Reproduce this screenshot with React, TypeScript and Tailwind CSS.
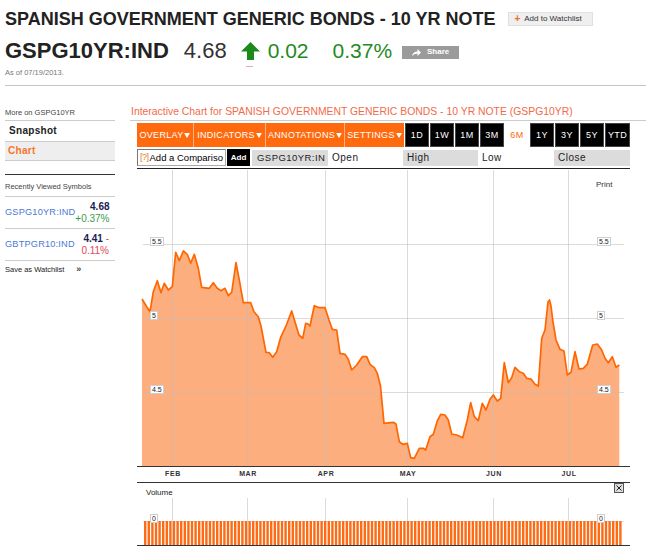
import React from 'react';

const PTS: [number, number][] = [
  [142, 299], [146.7, 306.7], [150, 311.7], [153.3, 291.7], [157.3, 280.7], [161, 292.7], [164.3, 283.3],
  [168.3, 290], [172.3, 286.7], [175.7, 252.3], [179.3, 260.7], [183.3, 251], [187.3, 254.3], [190.7, 263.3],
  [194.3, 254.3], [198.3, 268.3], [201.7, 287.3], [209.3, 288.3], [213.3, 282.7], [217.3, 288.3], [221, 290.7],
  [225, 288.3], [228.3, 295.7], [231.7, 292.3], [236, 262.7], [239.3, 280], [243.3, 302.7], [250.7, 302.7],
  [254, 311.7], [258.3, 316.7], [261, 326], [266, 352.3], [269.3, 352.7], [272.7, 357.3], [276.7, 351.7],
  [280.7, 337.3], [285.7, 326.7], [291.7, 311], [295, 322], [299, 335], [302.7, 338.3], [305.7, 323.3],
  [308, 324], [310, 326], [314.3, 305.7], [319.3, 307.7], [325, 307.7], [329, 320], [332.3, 329.3],
  [336.7, 330], [340, 353.3], [345, 354.3], [348.3, 359.3], [351.7, 370], [356.7, 365], [362.3, 356.7],
  [366.7, 356.7], [370, 364.3], [374.3, 367.7], [377.3, 373.3], [380.5, 386], [384, 423.3], [393.3, 422.3],
  [396, 424], [399.3, 441.7], [402.7, 444.3], [407.3, 443.3], [410.7, 457.7], [414.3, 458.3], [419.3, 448.3],
  [423.3, 448.3], [425.7, 450], [430, 436.7], [433.3, 434.3], [437.3, 421], [440.7, 414.3], [445, 415],
  [448.3, 420], [451.7, 434], [456.7, 435], [462.7, 437.7], [467.3, 420], [470.7, 402.7], [474.3, 416.7],
  [478.3, 420.7], [482.3, 403.3], [486, 410], [490, 399.3], [493.3, 395], [497.3, 401], [500.7, 398.3],
  [504.3, 362.7], [508.3, 382.7], [511.7, 377.7], [515, 367.3], [519.3, 371.7], [523.3, 373.3], [526.7, 378.3],
  [531, 379], [535, 384.3], [538.3, 386], [541.7, 338.3], [545, 330], [548, 302], [549.5, 300], [551, 306],
  [552.7, 320], [556, 340], [560, 349.3], [564, 351], [567.3, 375], [571, 372.3], [575, 351.7], [579, 369],
  [583.3, 368.3], [587.3, 364.3], [592.7, 345], [597.3, 344], [601.7, 350], [605, 358.3], [608.3, 362.7],
  [612.3, 356.7], [616, 367.3], [619.3, 365],
];

const GRID_X = [172, 247, 325, 407, 493, 568];
const MONTHS = ['FEB', 'MAR', 'APR', 'MAY', 'JUN', 'JUL'];
const GRID_Y = [244, 318, 392];
const GRID = 'rgba(190,190,190,0.55)';
const SVG_FONT = 'Liberation Sans, Arial, sans-serif';

function Tag({ x, y, w, label }: { x: number; y: number; w: number; label: string }) {
  return (
    <g>
      <rect x={x + 0.5} y={y + 0.5} width={w} height={8} fill="#fff" stroke="#cfcfcf" />
      <text x={x + 2} y={y + 7} fontSize={7} fill="#222" fontFamily={SVG_FONT}>
        {label}
      </text>
    </g>
  );
}

function Caret() {
  return (
    <svg width="6" height="5" viewBox="0 0 6 5" className="ml-[1px]">
      <path d="M0 0 H6 L3 5 Z" fill="#fff" />
    </svg>
  );
}

function PriceChart() {
  const line = PTS.map(([x, y]) => `${x},${y}`).join(' ');
  const area = `${line} 619.3,466 142,466`;
  const bars: number[] = [];
  for (let x = 144; x < 621; x += 3.6) bars.push(x);

  return (
    <svg width="493" height="380" viewBox="137 167 493 380" className="block">
      <line x1="137" x2="630" y1="168.5" y2="168.5" stroke="#222" />

      <polygon points={area} fill="#fdae7e" />
      {GRID_X.map((x) => (
        <line key={x} x1={x + 0.5} x2={x + 0.5} y1="170" y2="466" stroke={GRID} />
      ))}
      {GRID_Y.map((y) => (
        <line key={y} x1="143" x2="624" y1={y + 0.5} y2={y + 0.5} stroke={GRID} />
      ))}
      <polyline points={line} fill="none" stroke="#ff6600" strokeWidth="1.7" strokeLinejoin="round" />

      <Tag x={150} y={237} w={13} label="5.5" />
      <Tag x={150} y={311} w={7} label="5" />
      <Tag x={150} y={385} w={13} label="4.5" />
      <Tag x={597} y={237} w={13} label="5.5" />
      <Tag x={597} y={311} w={7} label="5" />
      <Tag x={597} y={385} w={13} label="4.5" />

      <text x="596" y="187" fontSize="8" fill="#333" fontFamily={SVG_FONT}>
        Print
      </text>

      <line x1="137" x2="630" y1="466.5" y2="466.5" stroke="#333" />
      {MONTHS.map((m, i) => (
        <text
          key={m}
          x={GRID_X[i] + 1}
          y="476"
          fontSize="7"
          fontWeight="bold"
          letterSpacing="0.6"
          textAnchor="middle"
          fill="#333"
          fontFamily={SVG_FONT}
        >
          {m}
        </text>
      ))}

      {/* volume pane */}
      <line x1="137" x2="630" y1="482.5" y2="482.5" stroke="#333" />
      <text x="146" y="495" fontSize="8" fill="#222" fontFamily={SVG_FONT}>
        Volume
      </text>
      <rect x="614.5" y="483.5" width="9" height="9" fill="#ddd" stroke="#555" />
      <path d="M616.5 485.5 L621.5 490.5 M621.5 485.5 L616.5 490.5" stroke="#222" strokeWidth="1" />
      {GRID_X.map((x) => (
        <line key={`v${x}`} x1={x + 0.5} x2={x + 0.5} y1="498" y2="545" stroke={GRID} />
      ))}
      <line x1="143" x2="624" y1="521.5" y2="521.5" stroke="#e4e4e4" />
      {bars.map((x) => (
        <rect key={x} x={x} y="521" width="2.4" height="24" fill="#ff6a14" />
      ))}
      <Tag x={150} y={514} w={7} label="0" />
      <Tag x={597} y={514} w={7} label="0" />
      <line x1="137" x2="630" y1="545.5" y2="545.5" stroke="#333" />
    </svg>
  );
}

function Header() {
  return (
    <div>
      <div className="flex items-center pl-[5px] pt-[9px] h-[29px]">
        <h1 className="text-[18px] leading-[20px] font-bold text-[#222]">
          SPANISH GOVERNMENT GENERIC BONDS - 10 YR NOTE
        </h1>
        <div className="ml-[13px] h-[14px] w-[85px] flex items-center bg-[#efefef] border border-[#e0e0e0]">
          <span className="ml-[5px] text-[10px] leading-none font-bold text-[#f26a1b]">+</span>
          <span className="ml-[4px] text-[8px] leading-none text-[#333]">Add to Watchlist</span>
        </div>
      </div>
      <div className="flex items-center pl-[5px] mt-[10px] h-[24px]">
        <span className="text-[22px] leading-[24px] font-bold text-[#222]">GSPG10YR:IND</span>
        <span className="ml-[15px] text-[22px] leading-[24px] text-[#333]">4.68</span>
        <span className="relative ml-[14px] flex items-center">
          <svg width="19" height="18" viewBox="0 0 19 18">
            <path d="M9.5 0 L19 9.5 L13 9.5 L13 18 L6 18 L6 9.5 L0 9.5 Z" fill="#1a8a1a" />
          </svg>
          <span className="absolute left-[5px] top-[24px] w-[7px] h-[1px] bg-[#f4a7a7]" />
        </span>
        <span className="ml-[8px] text-[21px] leading-[24px] text-[#1f8a1f]">0.02</span>
        <span className="ml-[24px] text-[21px] leading-[24px] text-[#1f8a1f]">0.37%</span>
        <span className="ml-[10px] mt-[2px] h-[13px] w-[57px] bg-[#9b9b9b] flex items-center justify-center gap-[6px]">
          <svg width="9" height="7" viewBox="0 0 9 7">
            <path d="M0 7 Q1 2.5 5.5 2.5 V0 L9 3.5 L5.5 7 V4.5 Q2 4.5 0 7 Z" fill="#fff" />
          </svg>
          <span className="text-[8px] leading-none font-bold text-white">Share</span>
        </span>
      </div>
      <div className="pl-[5px] mt-[5px] text-[7.5px] leading-[10px] text-[#777]">As of 07/19/2013.</div>
      <div className="ml-[5px] mt-[7px] h-[1px] bg-[#c4c4c4]" />
    </div>
  );
}

function Sidebar() {
  return (
    <div className="ml-[5px] w-[110px] text-[#222]">
      <div className="pt-[22px] pb-[2px] h-[35px] text-[7.5px] leading-[10px] text-[#444] border-b border-[#ccc]">
        More on GSPG10YR
      </div>
      <div className="h-[21px] flex items-center pl-[4px] text-[10px] leading-none font-bold tracking-[0.3px] text-[#222] border-b border-[#ccc]">
        Snapshot
      </div>
      <div className="h-[19px] flex items-center pl-[3px] bg-[#eeeeee] text-[10px] leading-none font-bold tracking-[0.3px] text-[#f7742c] border-b border-[#ccc]">
        Chart
      </div>
      <div className="mt-[13px] border-t border-[#333]" />
      <div className="h-[22px] pt-[3px] flex items-center text-[7.5px] leading-none text-[#444] border-b border-[#ccc]">
        Recently Viewed Symbols
      </div>
      <div className="h-[32px] flex items-center justify-between pr-[6px] border-b border-[#ccc]">
        <span className="text-[9.2px] leading-none tracking-[0.2px] text-[#4a78d6]">GSPG10YR:IND</span>
        <span className="flex flex-col items-end text-[10px] leading-[12px]">
          <span className="font-bold text-[#1b1b55]">4.68</span>
          <span className="text-[#3a9a50]">+0.37%</span>
        </span>
      </div>
      <div className="h-[32px] flex items-center justify-between pr-[6px] border-b border-[#ccc]">
        <span className="text-[9.2px] leading-none tracking-[0.2px] text-[#4a78d6]">GBTPGR10:IND</span>
        <span className="flex flex-col items-end text-[10px] leading-[12px]">
          <span className="font-bold text-[#1b1b55]">
            4.41 <span className="font-normal text-[#e2463c]">-</span>
          </span>
          <span className="text-[#e2465c]">0.11%</span>
        </span>
      </div>
      <div className="h-[17px] flex items-center text-[7.5px] leading-none text-[#222]">
        <span>Save as Watchlist</span>
        <span className="ml-[12px] text-[9px] font-bold text-[#444]">»</span>
      </div>
    </div>
  );
}

const MENUS = [
  { label: 'OVERLAY', w: 'w-[57px]' },
  { label: 'INDICATORS', w: 'w-[72px]' },
  { label: 'ANNOTATIONS', w: 'w-[79px]' },
  { label: 'SETTINGS', w: 'w-[59px]' },
];
const RANGES = ['1D', '1W', '1M', '3M', '6M', '1Y', '3Y', '5Y', 'YTD'];

function Toolbar() {
  return (
    <div className="ml-[7px] mt-[2px] h-[24px] flex">
      {MENUS.map((m, i) => (
        <div
          key={m.label}
          className={`${m.w} h-full flex items-center justify-center bg-[#ff6a0e] text-white text-[9px] leading-none tracking-[0.3px] ${
            i < MENUS.length - 1 ? 'border-r border-[#ffb27f]' : ''
          }`}
        >
          {m.label}
          <Caret />
        </div>
      ))}
      <div className="ml-[1px] flex gap-[1px]">
        {RANGES.map((r) =>
          r === '6M' ? (
            <div
              key={r}
              className="w-[24px] h-full flex items-center justify-center bg-white text-[#ff6a0e] text-[9px] leading-none tracking-[0.4px]"
            >
              {r}
            </div>
          ) : (
            <div
              key={r}
              className={`${r === 'YTD' ? 'w-[25px]' : 'w-[24px]'} h-full flex items-center justify-center bg-black border border-[#444] text-white text-[9px] leading-none tracking-[0.4px]`}
            >
              {r}
            </div>
          )
        )}
      </div>
    </div>
  );
}

function CompareRow() {
  const cell = 'h-[16px] mt-[1px] flex items-center pl-[4px] text-[10px] leading-none tracking-[0.5px] text-[#222]';
  return (
    <div className="ml-[7px] mt-[2px] h-[18px] flex items-start">
      <div className="w-[89px] h-[17px] flex items-center bg-white border border-[#aaa] border-t-[#777] border-l-[#777] overflow-hidden">
        <span className="ml-[2px] text-[9px] leading-none text-[#e07a2a] tracking-[-0.5px]">[?]</span>
        <span className="ml-[1px] text-[9.5px] leading-none text-black whitespace-nowrap">Add a Compariso</span>
      </div>
      <div className="ml-[1px] w-[23px] h-[17px] flex items-center justify-center bg-black text-white text-[8px] font-bold leading-none">
        Add
      </div>
      <div className="ml-[2px] w-[76px] h-[16px] mt-[1px] flex items-center pl-[5px] bg-[#dcdcdc] overflow-hidden">
        <span className="text-[9.5px] leading-none tracking-[0.45px] text-[#222] whitespace-nowrap">GSPG10YR:IN</span>
      </div>
      <div className={`w-[75px] bg-white ${cell}`}>Open</div>
      <div className={`w-[75px] bg-[#dcdcdc] ${cell}`}>High</div>
      <div className={`w-[76px] bg-white ${cell}`}>Low</div>
      <div className={`w-[76px] bg-[#dcdcdc] ${cell}`}>Close</div>
    </div>
  );
}

export default function App() {
  return (
    <div className="w-[646px] h-[557px] overflow-hidden bg-white font-['Liberation_Sans',Arial,sans-serif]">
      <Header />
      <div className="flex">
        <Sidebar />
        <div className="ml-[15px] w-[516px]">
          <div className="h-[35px] pt-[19px] pl-[1px] text-[10.4px] leading-[13px] text-[#f26a4a] border-b border-[#ccc] whitespace-nowrap">
            Interactive Chart for SPANISH GOVERNMENT GENERIC BONDS - 10 YR NOTE (GSPG10YR)
          </div>
          <Toolbar />
          <CompareRow />
          <div className="ml-[7px]">
            <PriceChart />
          </div>
        </div>
      </div>
    </div>
  );
}
